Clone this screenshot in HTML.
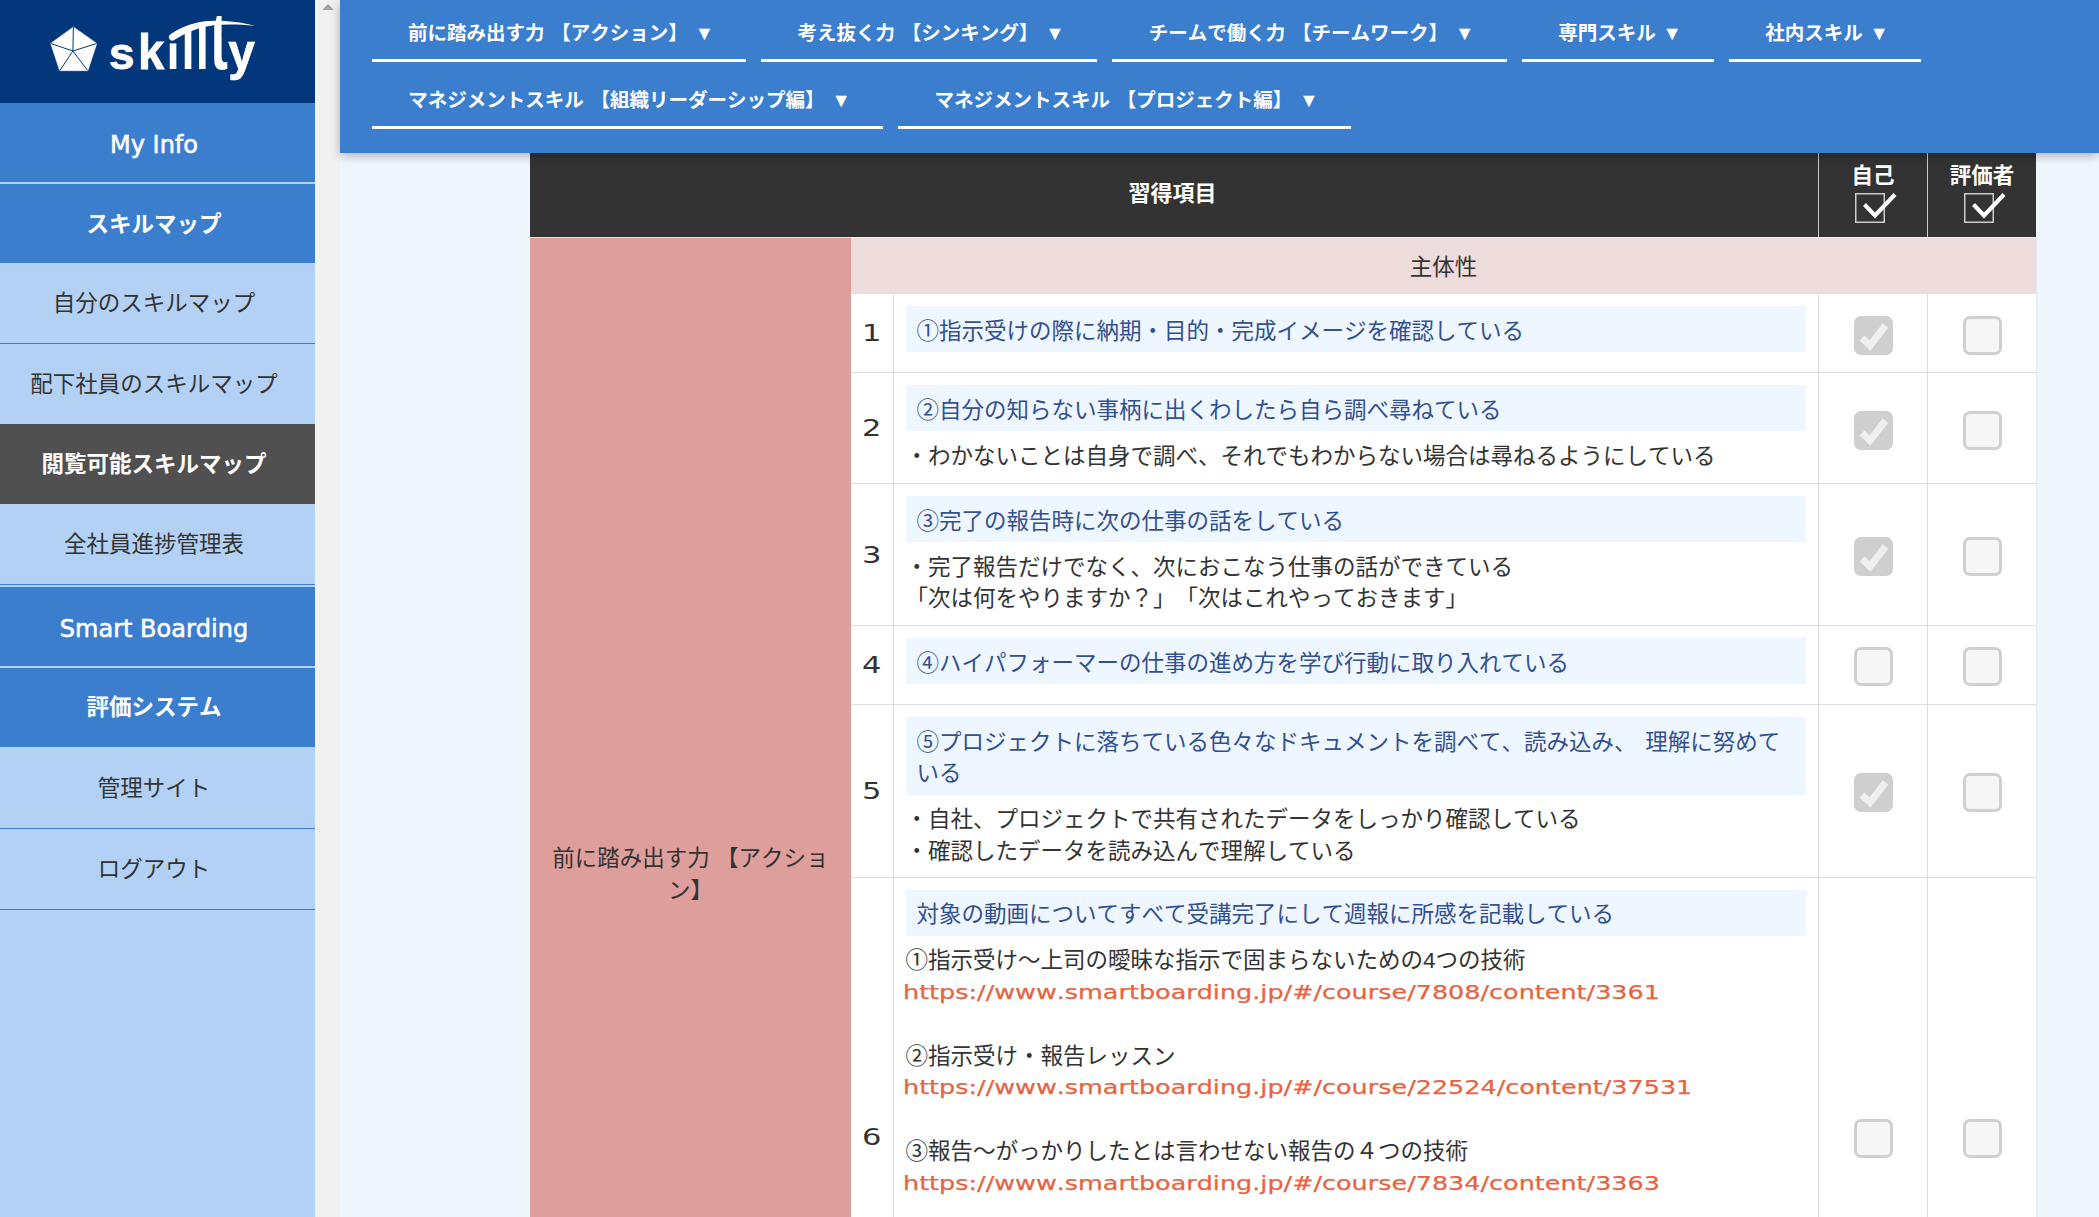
<!DOCTYPE html>
<html lang="ja">
<head>
<meta charset="utf-8">
<title>skillty</title>
<style>
*{box-sizing:border-box;margin:0;padding:0}
html,body{width:2099px;height:1217px;overflow:hidden}
body{position:relative;background:#eff6fe;color:#333;
  font-family:"Liberation Sans","Noto Sans CJK JP",sans-serif;font-size:22.5px;line-height:31.5px;text-spacing-trim:space-all;font-kerning:none}
.lat{font-family:"DejaVu Sans","Liberation Sans",sans-serif}

/* ---------- sidebar ---------- */
#side{position:absolute;left:0;top:0;width:315px;height:1217px;background:#b3d1f4;overflow:hidden}
#logo{position:absolute;left:0;top:0;width:315px;height:103px;background:#02377b}
.it{position:absolute;left:0;width:315px;display:flex;align-items:center;justify-content:center;
  white-space:nowrap;color:#333;padding:2px 7px 0 0}
.it.b{background:#3c7ece;color:#fff;font-weight:bold}
.it.d{background:#505050;color:#fff;font-weight:bold}
.it.l{border-bottom:1.5px solid #3c7ece}
.it .lat{font-size:24px;font-weight:normal;-webkit-text-stroke:.55px #fff;position:relative;top:2.5px}

/* ---------- sidebar scrollbar ---------- */
#sb{position:absolute;left:315px;top:0;width:25px;height:1217px;background:#f1f1f1}
#sb i{position:absolute;left:6.5px;top:4px;width:0;height:0;border-left:6px solid transparent;
  border-right:6px solid transparent;border-bottom:6px solid #a3a3a3}

/* ---------- top nav ---------- */
#nav{position:absolute;left:340px;top:0;width:1759px;height:152.5px;background:#3c7ece;
  box-shadow:0 3px 10px rgba(0,0,0,.28);z-index:5}
.tab{position:absolute;height:62px;border-bottom:3.5px solid #fff;color:#fff;font-weight:bold;
  font-size:19.5px;line-height:30px;padding:18px 0 0 4px;text-align:center;white-space:nowrap;word-spacing:1.5px}
.tab.r2{top:67px}

/* ---------- table ---------- */
#tbr{position:absolute;left:2036px;top:237px;width:1px;height:980px;background:#dfe6ee}
#tbl{position:absolute;left:530px;top:153px;width:1506px;height:1064px;background:#fff;overflow:hidden}
#th{position:absolute;left:0;top:0;width:1506px;height:84px;background:#333;color:#fff;font-weight:bold}
#th .c0{position:absolute;left:0;top:0;width:1288px;height:84px;display:flex;align-items:center;
  justify-content:center;font-size:22px;padding-bottom:3px;padding-right:3px}
#th .c1,#th .c2{position:absolute;top:0;height:84px;border-left:1.5px solid #ccc;text-align:center;
  font-size:21.5px;line-height:24px;padding-top:11px}
#th .c1{left:1288px;width:109px}
#th .c2{left:1397px;width:109px}
.hck{display:block;margin:2.5px auto 0;width:42px;height:32px;position:relative;left:2.5px}
#cat{position:absolute;left:0;top:83.5px;width:321px;height:1272px;background:#de9e9b;border-top:1px solid #f1d9d8;display:flex;
  align-items:center;justify-content:center;text-align:center;padding:3px 20px 0;white-space:nowrap}
#sub{position:absolute;left:321px;top:83.5px;width:1185px;height:57.5px;background:#eddcdb;border-top:1px solid #f8efef;display:flex;
  align-items:center;justify-content:center;padding-top:3.5px}
.row{position:absolute;left:321px;width:1185px;border-bottom:1px solid #ddd}
.row .n{position:absolute;left:0;top:0;bottom:0;width:42.5px;border-right:1px solid #ddd;display:flex;
  align-items:center;padding-left:10.5px;font-family:"DejaVu Sans","Liberation Sans",sans-serif;font-size:23.5px;padding-top:2px}
.row .n b{font-weight:normal;display:inline-block;transform-origin:0 50%;transform:scaleX(1.3)}
.row .c{position:absolute;left:42.5px;top:0;bottom:0;width:924.5px;padding:12px 12px 12px 12px}
.row .s1,.row .s2{position:absolute;top:0;bottom:0;border-left:1px solid #ddd;display:flex;
  align-items:center;justify-content:center;padding-top:4px}
.row .s1{left:967px;width:109px}
.row .s2{left:1076px;width:109px}
.ttl{background:#eef6ff;color:#33508f;padding:9.5px 11px 5px;margin-bottom:7.5px;min-height:46px;word-spacing:2.5px}
.dsc{white-space:nowrap;position:relative;top:2px}
.url{color:#e6643f;-webkit-text-stroke:.25px #e6643f;display:inline-block;font-family:"DejaVu Sans","Liberation Sans",sans-serif;
  font-size:19.5px;transform-origin:0 50%;transform:scaleX(1.3055);white-space:nowrap;position:relative;top:-1px;margin-left:-2.5px}
.cb{display:block;width:39px;height:39px;border-radius:7px}
.cb.off{background:#f6f6f6;border:3px solid #d0d0d0}
.cb.on{background:#cfcfcf}
</style>
</head>
<body>

<div id="side">
  <div id="logo"><svg id="lg" width="315" height="103" viewBox="0 0 315 103" style="position:absolute;left:0;top:0" font-family="Liberation Sans, sans-serif" font-weight="bold" font-size="44" fill="#fff">
    <polygon points="73.4,26.9 96.8,43.4 87.9,70.7 59.7,70.7 50.6,43.4" stroke="#fff" stroke-width=".5" stroke-linejoin="round"/>
    <path d="M72.9 51 L73.4 27 M72.9 51 L50.8 43.5 M72.9 51 L96.6 43.5 M72.9 51 L59.9 70.5 M72.9 51 L87.7 70.5" stroke="#02377b" stroke-width="1" fill="none"/>
    <text transform="translate(109.1 68.7) scale(1.037 1)" stroke="#fff" stroke-width=".9">s</text>
    <text transform="translate(138.1 69.1) scale(1.073 1.151)" stroke="#fff" stroke-width=".7">k</text>
    <text transform="translate(166.6 69.4) scale(1.076 1.118)">i</text>
    <rect x="168" y="28" width="10" height="15.4" fill="#02377b"/>
    <text transform="translate(181.4 69.4) scale(1.076 1.286)">l</text>
    <text transform="translate(195.8 69.4) scale(1.076 1.427)">l</text>
    <text transform="translate(209.95 68.8) scale(1.222 1.839)">t</text>
    <rect x="208" y="25" width="6.2" height="10.5" fill="#02377b"/><rect x="221.6" y="25" width="7" height="10.5" fill="#02377b"/>
    <text transform="translate(228.3 69.3) scale(1.09 1.166)" stroke="#fff" stroke-width=".6">y</text>
    <path d="M170.2 34.6 C179 27.8 191 23.2 205 21.2 C217 19.9 236 20.6 254.8 25.7 C240 24.4 226 23.7 212 25.4 C198 27.6 186 32.2 174.6 39.8 A3 3 0 0 1 170.2 34.6 Z"/>
  </svg></div>
  <div class="it b" style="top:103px;height:79px"><span class="lat">My Info</span></div>
  <div class="it b" style="top:184px;height:79px">スキルマップ</div>
  <div class="it l" style="top:263px;height:80.5px">自分のスキルマップ</div>
  <div class="it" style="top:343.5px;height:80px">配下社員のスキルマップ</div>
  <div class="it d" style="top:423.5px;height:80.5px">閲覧可能スキルマップ</div>
  <div class="it l" style="top:504px;height:81px">全社員進捗管理表</div>
  <div class="it b" style="top:586.5px;height:79.5px"><span class="lat">Smart Boarding</span></div>
  <div class="it b" style="top:667.5px;height:79px;font-weight:bold">評価システム</div>
  <div class="it l" style="top:746.5px;height:82.5px">管理サイト</div>
  <div class="it l" style="top:829px;height:81px">ログアウト</div>
</div>
<div id="sb"><i></i></div>

<div id="nav">
  <div class="tab" style="left:32px;width:374px">前に踏み出す力 【アクション】 ▼</div>
  <div class="tab" style="left:421px;width:336px">考え抜く力 【シンキング】 ▼</div>
  <div class="tab" style="left:772px;width:395px">チームで働く力 【チームワーク】 ▼</div>
  <div class="tab" style="left:1182px;width:192px">専門スキル ▼</div>
  <div class="tab" style="left:1389px;width:192px">社内スキル ▼</div>
  <div class="tab r2" style="left:32px;width:511px">マネジメントスキル 【組織リーダーシップ編】 ▼</div>
  <div class="tab r2" style="left:558px;width:453px">マネジメントスキル 【プロジェクト編】 ▼</div>
</div>

<div id="tbr"></div>
<div id="tbl">
  <div id="th">
    <div class="c0">習得項目</div>
    <div class="c1">自己<svg class="hck" viewBox="0 0 42 32"><rect x=".75" y="2.75" width="28.5" height="28.5" fill="none" stroke="#ccc" stroke-width="1.5"/><path d="M9.5 13.5 L20 24.5 L40 3.5" fill="none" stroke="#fff" stroke-width="4"/></svg></div>
    <div class="c2">評価者<svg class="hck" viewBox="0 0 42 32"><rect x=".75" y="2.75" width="28.5" height="28.5" fill="none" stroke="#ccc" stroke-width="1.5"/><path d="M9.5 13.5 L20 24.5 L40 3.5" fill="none" stroke="#fff" stroke-width="4"/></svg></div>
  </div>
  <div id="cat">前に踏み出す力 【アクショ<br>ン】</div>
  <div id="sub">主体性</div>

  <div class="row" style="top:141px;height:79px">
    <div class="n"><b>1</b></div>
    <div class="c"><div class="ttl">①指示受けの際に納期・目的・完成イメージを確認している</div></div>
    <div class="s1"><svg class="cb on" viewBox="0 0 39 39"><path d="M8 22 L16 29.5 L31.5 9.5" fill="none" stroke="#efefef" stroke-width="7"/></svg></div>
    <div class="s2"><span class="cb off"></span></div>
  </div>

  <div class="row" style="top:220px;height:111px">
    <div class="n"><b>2</b></div>
    <div class="c"><div class="ttl">②自分の知らない事柄に出くわしたら自ら調べ尋ねている</div>
      <div class="dsc">・わかないことは自身で調べ、それでもわからない場合は尋ねるようにしている</div></div>
    <div class="s1"><svg class="cb on" viewBox="0 0 39 39"><path d="M8 22 L16 29.5 L31.5 9.5" fill="none" stroke="#efefef" stroke-width="7"/></svg></div>
    <div class="s2"><span class="cb off"></span></div>
  </div>

  <div class="row" style="top:331px;height:142px">
    <div class="n"><b>3</b></div>
    <div class="c"><div class="ttl">③完了の報告時に次の仕事の話をしている</div>
      <div class="dsc">・完了報告だけでなく、次におこなう仕事の話ができている<br>「次は何をやりますか？」「次はこれやっておきます」</div></div>
    <div class="s1"><svg class="cb on" viewBox="0 0 39 39"><path d="M8 22 L16 29.5 L31.5 9.5" fill="none" stroke="#efefef" stroke-width="7"/></svg></div>
    <div class="s2"><span class="cb off"></span></div>
  </div>

  <div class="row" style="top:473px;height:79px">
    <div class="n"><b>4</b></div>
    <div class="c"><div class="ttl">④ハイパフォーマーの仕事の進め方を学び行動に取り入れている</div></div>
    <div class="s1" style="padding-top:2px"><span class="cb off"></span></div>
    <div class="s2" style="padding-top:2px"><span class="cb off"></span></div>
  </div>

  <div class="row" style="top:552px;height:172.5px">
    <div class="n"><b>5</b></div>
    <div class="c"><div class="ttl">⑤プロジェクトに落ちている色々なドキュメントを調べて、読み込み、 理解に努めて<br>いる</div>
      <div class="dsc">・自社、プロジェクトで共有されたデータをしっかり確認している<br>・確認したデータを読み込んで理解している</div></div>
    <div class="s1"><svg class="cb on" viewBox="0 0 39 39"><path d="M8 22 L16 29.5 L31.5 9.5" fill="none" stroke="#efefef" stroke-width="7"/></svg></div>
    <div class="s2"><span class="cb off"></span></div>
  </div>

  <div class="row" style="top:724.5px;height:519px">
    <div class="n"><b>6</b></div>
    <div class="c"><div class="ttl">対象の動画についてすべて受講完了にして週報に所感を記載している</div>
      <div class="dsc">①指示受け～上司の曖昧な指示で固まらないための4つの技術<br>
<span class="url">https://www.smartboarding.jp/#/course/7808/content/3361</span><br>
<br>
②指示受け・報告レッスン<br>
<span class="url">https://www.smartboarding.jp/#/course/22524/content/37531</span><br>
<br>
③報告～がっかりしたとは言わせない報告の４つの技術<br>
<span class="url">https://www.smartboarding.jp/#/course/7834/content/3363</span></div></div>
    <div class="s1"><span class="cb off"></span></div>
    <div class="s2"><span class="cb off"></span></div>
  </div>
</div>

</body>
</html>
